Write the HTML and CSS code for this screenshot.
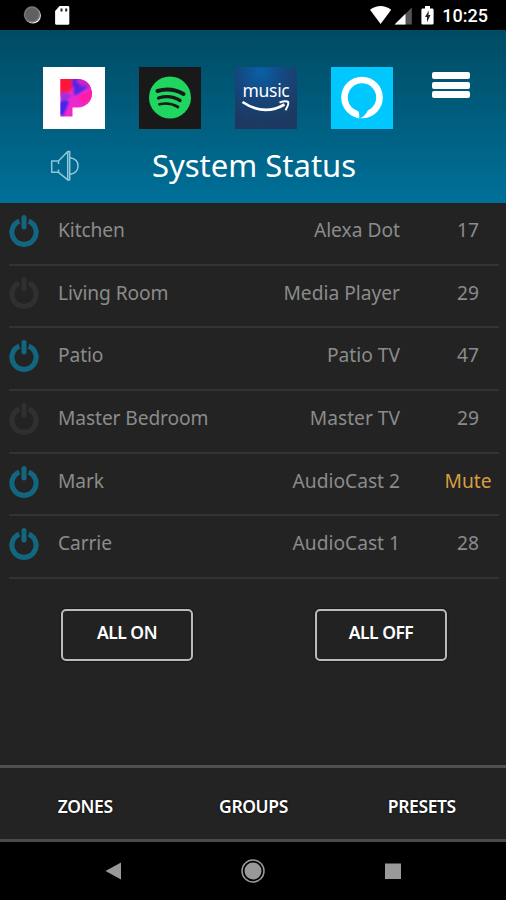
FILE: index.html
```html
<!DOCTYPE html>
<html lang="en">
<head>
<meta charset="utf-8">
<title>System Status</title>
<link rel="stylesheet" href="styles.css">
</head>
<body>
<svg class="defs" width="0" height="0">
  <symbol id="power" viewBox="0 0 32 34"><path d="M11.3 7.1a12.1 12.1 0 1 0 9.4 0" fill="none" stroke="currentColor" stroke-width="5.1"/><path d="M16 3.500v9.500" fill="none" stroke="currentColor" stroke-width="5" stroke-linecap="round"/></symbol>
</svg>
<div class="phone">
  <div class="status">
    <svg class="status-left" width="60" height="30" viewBox="0 0 60 30"><circle cx="20.9" cy="15.5" r="8" fill="#eee"/><circle cx="20" cy="14.500" r="8.200" fill="#777"/><circle cx="20" cy="14.500" r="6.600" fill="#606060"/><path d="M47.500 6H56q1.300 0 1.300 1.300v16q0 1.500-1.500 1.500H44.600q-1.500 0-1.500-1.500V11z" fill="#fff"/><path d="M49.500 8.500v3M54.200 8.500v3" stroke="#222" stroke-width="2"/></svg>
    <svg class="status-right" width="70" height="30" viewBox="0 0 70 30"><path d="M1 9.800Q11.600 2.300 22.200 9.800L11.600 24z" fill="#fff"/><path d="M42.800 7.500v17H25.600z" fill="#555"/><path d="M36.500 13.800v10.700H25.600z" fill="#fff"/><path d="M56 6h5v2.500h2.200q1.400 0 1.400 1.400v13.300q0 1.400-1.400 1.400h-9.400q-1.400 0-1.400-1.400V9.900q0-1.400 1.400-1.400H56z" fill="#fff"/><path d="M59.800 10.500 56 17h2v5.200l3.500-7.200h-2z" fill="#222"/></svg>
    <span class="clock">10:25</span>
  </div>
  <header>
    <div class="apps">
      <svg class="app" viewBox="0 0 62 62">
        <defs><filter id="soft"><feGaussianBlur stdDeviation="1"/></filter><clipPath id="pc"><path d="M17.500 12H34C43 12 49 18 49 26.500S42 40.500 35 40.500H29.500v9H17.500z"/></clipPath></defs>
        <path d="M0 0h62v62H0z" fill="#fff"/>
        <g clip-path="url(#pc)"><path d="M17 11h33v40H17z" fill="#ee28cf"/><g filter="url(#soft)"><path d="M13 8h20l-2 12-7 6-11 5z" fill="#ff1932"/><path d="m31 9 9 0 2 8-10 6-4-6z" fill="#5a22e0"/><path d="m33 14 5-4 12 7-5 6-6-4z" fill="#cf24c8"/><path d="m30 23 12-5 2 3-12 8z" fill="#4c2ae8"/><path d="m17 26 5-1 7 4-10 8z" fill="#9c30dd"/><path d="m14 36 9-3 3 2-6 14-6-2z" fill="#3e27ee"/><path d="m35 29 15-6v8l-11 6z" fill="#ff1fa0"/></g></g>
      </svg>
      <svg class="app" viewBox="0 0 62 62"><path d="M0 0h62v62H0z" fill="#191919"/><circle cx="31" cy="30.500" r="21" fill="#1fd760"/><g fill="none" stroke="#191919" stroke-linecap="round"><path d="M18.500 24q14-4 26 3" stroke-width="4"/><path d="M19.500 31q12-3.500 21.500 2.500" stroke-width="3.300"/><path d="M20.500 37.300q10-2.500 18.500 2.700" stroke-width="2.700"/></g></svg>
      <div class="app music"><span>music</span><svg viewBox="0 0 62 62" class="smile"><path d="M7.500 35q21.500 14.500 42 2.500" fill="none" stroke="#fff" stroke-width="2.700"/><path d="M44.500 35.500q6.500-2.200 8.500-.6 1.300 2-2.500 8.300" fill="none" stroke="#fff" stroke-width="2"/></svg></div>
      <svg class="app" viewBox="0 0 62 62"><path d="M0 0h62v62H0z" fill="#00c8ff"/><circle cx="31" cy="30.500" r="17.500" fill="none" stroke="#fff" stroke-width="6.600"/><path d="M27.300 43.500V50l.7 2 1.500-.9Q34.500 48.800 37 43z" fill="#00c8ff"/><path d="M23 42.500q5.200 1.800 5.200 4.800v4.200l-5-2z" fill="#fff"/></svg>
      <div class="menu"><i></i><i></i><i></i></div>
    </div>
    <div class="heading">
      <svg class="speaker" width="32" height="32" viewBox="0 0 32 32" fill="none" stroke="#91c5d8" stroke-width="1.500" stroke-linejoin="round"><path d="M1.700 11v11.300h6.800l9.200 7.600V1.600L8.500 11zM8.500 11v3M8.500 19.500v3M17.700 1.600h2v28.300h-2M20.500 7.800q7.500 1.500 7.500 8.100t-7.500 8.300"/></svg>
      <h1>System Status</h1>
    </div>
  </header>
  <main>
    <ul class="zones">
      <li class="on"><svg><use href="#power"/></svg><span class="name">Kitchen</span><span class="source">Alexa Dot</span><b>17</b></li>
      <li><svg><use href="#power"/></svg><span class="name">Living Room</span><span class="source">Media Player</span><b>29</b></li>
      <li class="on"><svg><use href="#power"/></svg><span class="name">Patio</span><span class="source">Patio TV</span><b>47</b></li>
      <li><svg><use href="#power"/></svg><span class="name">Master Bedroom</span><span class="source">Master TV</span><b>29</b></li>
      <li class="on"><svg><use href="#power"/></svg><span class="name">Mark</span><span class="source">AudioCast 2</span><b class="mute">Mute</b></li>
      <li class="on"><svg><use href="#power"/></svg><span class="name">Carrie</span><span class="source">AudioCast 1</span><b>28</b></li>
    </ul>
    <div class="actions"><button>ALL ON</button><button>ALL OFF</button></div>
  </main>
  <nav><a>ZONES</a><a>GROUPS</a><a>PRESETS</a></nav>
  <div class="system">
    <svg width="24" height="26" viewBox="0 0 24 26"><path d="M4.500 13 20 4.500v17z" fill="#999"/></svg>
    <svg width="26" height="26" viewBox="0 0 26 26"><circle cx="13" cy="13" r="11" fill="none" stroke="#999" stroke-width="1.500"/><circle cx="13" cy="13" r="8.500" fill="#999"/></svg>
    <svg width="24" height="26" viewBox="0 0 24 26"><path d="M4 5.500h16v15.500H4z" fill="#999"/></svg>
  </div>
</div>
</body>
</html>
```
FILE: styles.css
```css
* { box-sizing: border-box; }
body { margin: 0; background: #000; font-family: "Noto Sans", "Open Sans", sans-serif; }
.defs { display: block; position: absolute; }
.phone { width: 506px; height: 900px; display: flex; flex-direction: column; background: #232323; overflow: hidden; }
.status { height: 30px; flex: none; background: #000; display: flex; align-items: center; padding: 0 18px 0 12px; }
.status-right { margin-left: auto; }
.clock { width: 47px; margin-left: 2px; color: #fff; font: 500 18px/30px Roboto, sans-serif; padding-top: 2px; text-align: right; white-space: nowrap; }
header { height: 172.5px; flex: none; background: linear-gradient(#004b63, #007099); padding: 36.5px 36px 0 43px; }
.apps { display: flex; gap: 34px; height: 62px; }
.app { display: block; flex: none; width: 62px; height: 62px; }
.music { position: relative; background: radial-gradient(circle at 42% 8%, #0960a6 0, #15477f 35%, #1d3961 75%); color: #fff; text-align: center; font-size: 17.5px; line-height: 47px; }
.music span { letter-spacing: -.3px; }
.smile { position: absolute; inset: 0; }
.menu { width: 38px; margin-left: auto; padding-top: 5.5px; display: grid; grid-auto-rows: 7px; gap: 2.6px; align-content: start; }
.menu i { background: #fff; border-radius: 2px; }
.heading { height: 73px; display: flex; align-items: center; }
.speaker { margin: 2px 0 0 7px; flex: none; }
h1 { margin: 0 0 0 27px; flex: none; width: 290px; text-align: center; font-size: 31px; font-weight: 400; line-height: 40px; color: #fff; }
main { flex: 1; }
.zones { margin: 0 7px 0 9px; padding: 0.5px 0 0; list-style: none; }
.zones li { height: 62.7px; border-bottom: 2px solid #333; display: grid; grid-template-columns: 49px 180px 162px 1fr; align-items: start; color: #8b8b8b; font-size: 19.2px; line-height: 54.6px; white-space: nowrap; }
.zones svg { width: 32px; height: 34px; margin: 10.8px 0 0 -.7px; color: #303030; }
.zones .on svg { color: #126680; }
.source { text-align: right; }
.name { letter-spacing: -.1px; }
.zones b { font-weight: 400; text-align: center; padding-right: 1px; margin-left: 38px; }
.zones .mute { color: #d99e3f; }
.actions { display: flex; justify-content: space-between; margin: 30px 59px 0 61px; }
button { width: 132px; height: 52px; border: 2px solid #bbb; border-radius: 5px; background: #222; color: #fff; font: 600 17.5px/1 "Noto Sans", sans-serif; letter-spacing: -.5px; padding: 0 0 5px; box-shadow: 0 0 2px #000; }
nav { flex: none; height: 77.5px; border-top: 3px solid #505050; border-bottom: 3px solid #4a4a4a; display: grid; grid-template-columns: repeat(3, 1fr); align-items: center; text-align: center; color: #fff; font-size: 17.5px; font-weight: 600; letter-spacing: -.4px; padding: 5px 0 0 1px; text-shadow: 0 0 2px #000; }
.system { flex: none; height: 58px; background: #000; display: flex; justify-content: space-between; align-items: center; padding: 0 101px; }
```
